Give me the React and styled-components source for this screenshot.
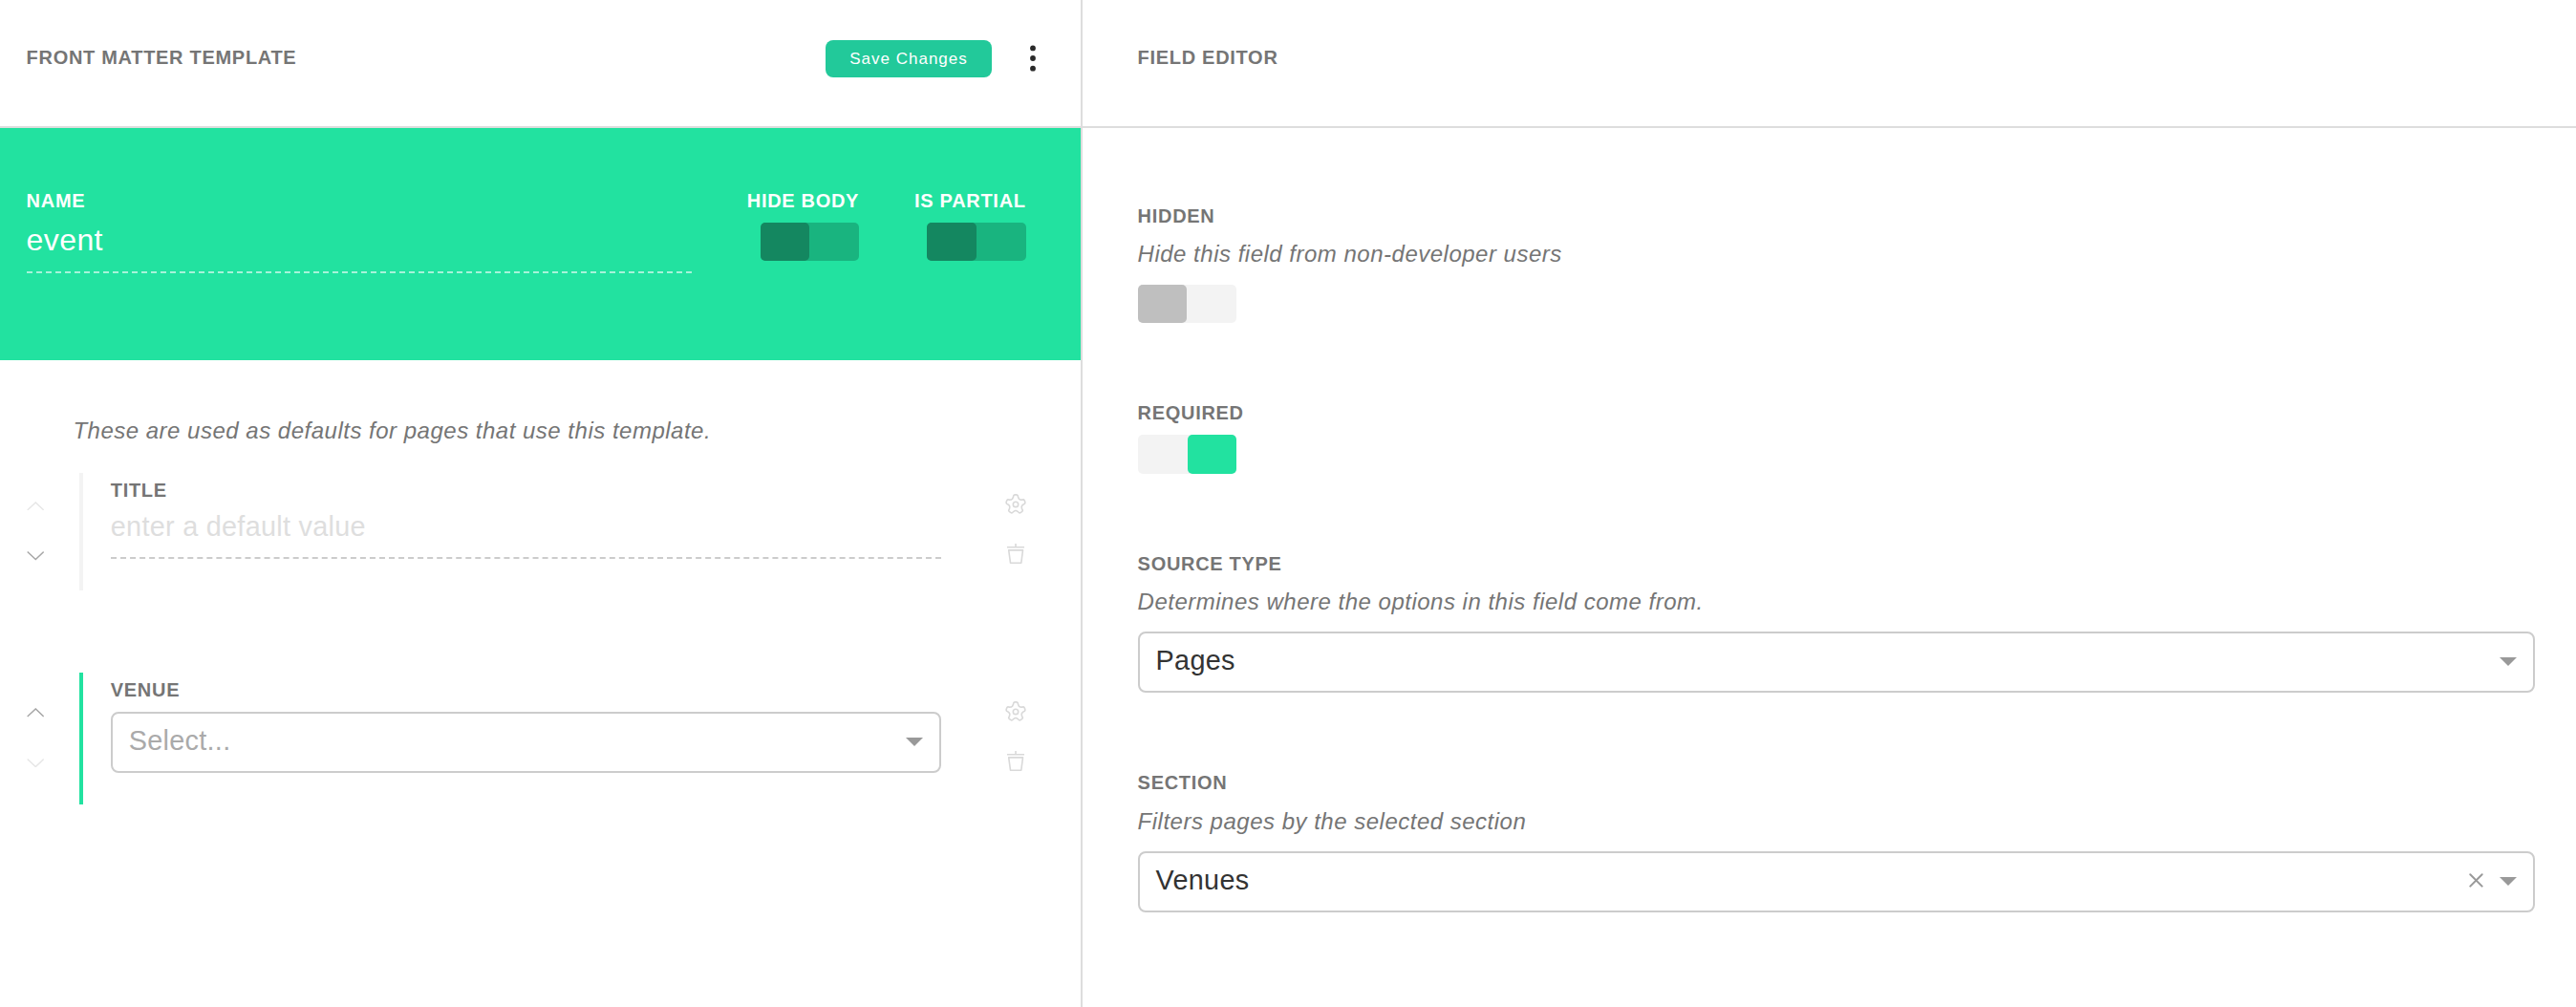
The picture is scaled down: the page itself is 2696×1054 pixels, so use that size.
import React from "react";
import styled, { createGlobalStyle } from "styled-components";

const GREEN = "#22e2a0";

const GlobalStyle = createGlobalStyle`
  * { box-sizing: border-box; }
  body {
    margin: 0;
    background: #fff;
    color: #2f2f2f;
    font-family: "Liberation Sans", Arial, sans-serif;
    letter-spacing: 0.5px;
  }
  svg { display: block; flex: none; }
`;

const Shell = styled.div`
  display: grid;
  grid-template-columns: 1133px 1fr;
  height: 1054px;
  overflow: hidden;
`;

const Panel = styled.section`
  display: flex;
  flex-direction: column;
  min-width: 0;
  border-right: ${(p) => (p.$divided ? "2px solid #ddd" : "none")};
`;

const Header = styled.header`
  display: flex;
  align-items: flex-start;
  height: 134px;
  padding: 42px 0 0 ${(p) => p.$inset}px;
  border-bottom: 2px solid #ddd;
`;

const Label = styled.div`
  font-size: 20px;
  letter-spacing: 0.7px;
  line-height: 24px;
  font-weight: 700;
  color: ${(p) => (p.$light ? "#fff" : "#757575")};
  text-transform: uppercase;
  white-space: nowrap;
`;

const Title = styled(Label)`
  flex: 1;
  margin-top: 6px;
`;

const SaveButton = styled.button`
  width: 174px;
  height: 39px;
  padding: 0;
  border: 0;
  border-radius: 8px;
  background: #22c99a;
  color: #fff;
  font: 17px/20px "Liberation Sans", Arial, sans-serif;
  letter-spacing: 1px;
`;

const MenuButton = styled.div`
  display: flex;
  margin: 0 44px 0 37px;
`;

const Banner = styled.div`
  display: flex;
  gap: 57.9px;
  height: 243px;
  padding: 64px 57.3px 0 27.6px;
  background: ${GREEN};
`;

const NameField = styled.div`
  flex: 1;
`;

const NameValue = styled.div`
  margin-top: 10px;
  padding-bottom: 14px;
  border-bottom: 2px dashed rgba(255, 255, 255, 0.6);
  color: #fff;
  font-size: 32px;
  letter-spacing: 0.4px;
  line-height: 38px;
`;

const SwitchField = styled.div`
  display: flex;
  flex-direction: column;
  align-items: flex-end;
  gap: 11px;
`;

const Track = styled.div`
  display: flex;
  justify-content: ${(p) => (p.$on ? "flex-end" : "flex-start")};
  width: 103.5px;
  height: 40.4px;
  border-radius: 5px;
  background: ${(p) => (p.$dark ? "#19b47f" : "#f3f3f3")};
`;

const Knob = styled.div`
  width: ${(p) => (p.$on ? "51px" : "50%")};
  border-radius: 5px;
  background: ${(p) => (p.$dark ? "#148760" : p.$on ? GREEN : "#bfbfbf")};
`;

const Hint = styled.p`
  margin: 0;
  color: #757575;
  font-size: 24px;
  line-height: 29px;
  font-style: italic;
`;

const Defaults = styled.div`
  padding: 59px 57px 0 27.6px;
`;

const DefaultsHint = styled(Hint)`
  margin: 0 0 30px 48.8px;
`;

const Rows = styled.div`
  display: flex;
  flex-direction: column;
  gap: 86px;
`;

const Row = styled.div`
  display: flex;
`;

const Movers = styled.div`
  display: flex;
  flex-direction: column;
  justify-content: center;
  gap: 43px;
  width: 55.4px;
  padding-bottom: 2px;
`;

const RowBody = styled.div`
  width: 902px;
  padding: 6px 0 33px 28.8px;
  border-left: 4px solid ${(p) => (p.$active ? GREEN : "#f3f3f3")};
`;

const TextInput = styled.div`
  margin-top: 9px;
  padding-bottom: 15px;
  border-bottom: 2px dashed #ccc;
  color: #dedede;
  font-size: 28.8px;
  letter-spacing: 0.29px;
  line-height: 34px;
`;

const Actions = styled.div`
  display: flex;
  flex-direction: column;
  justify-content: center;
  gap: 31px;
  margin-left: auto;
  padding-bottom: 5.5px;
`;

const SelectBox = styled.div`
  display: flex;
  align-items: center;
  gap: 17.5px;
  height: 64px;
  margin-top: ${(p) => p.$gap}px;
  padding: 0 17px 1px;
  border: 2px solid #ccc;
  border-radius: 8px;
`;

const SelectText = styled.div`
  flex: 1;
  padding-bottom: 3px;
  color: ${(p) => (p.$placeholder ? "#aaa" : "#333")};
  font-size: 28.8px;
  letter-spacing: 0.29px;
  line-height: 34px;
`;

const Caret = styled.span`
  border: 9px solid transparent;
  border-top-color: #999;
  border-bottom: 0;
`;

const Editor = styled.div`
  display: flex;
  flex-direction: column;
  gap: 82px;
  padding: 80px 43px 0 57.6px;
`;

const EditorHint = styled(Hint)`
  margin: 13.4px 0 17.2px;
`;

const ToggleSpace = styled.div`
  height: 11.2px;
`;

const Dots = () => (
  <svg width="12" height="39" viewBox="0 0 12 39" fill="#2a2a2a">
    <circle cx="6" cy="8.4" r="2.9" />
    <circle cx="6" cy="19" r="2.9" />
    <circle cx="6" cy="29.7" r="2.9" />
  </svg>
);

const Chevron = ({ down, dim }) => (
  <svg width="18" height="9.5" viewBox="0 0 18 9.5" fill="none" stroke={dim ? "#e6e6e6" : "#a6a6a6"} strokeWidth="1.4">
    <path d={down ? "M0.7 0.6 9.3 8.6 17.7 0.6" : "M0.7 8.9 9.3 0.9 17.7 8.9"} />
  </svg>
);

const polar = (r, deg) => {
  const a = (deg * Math.PI) / 180;
  return `${(11 + r * Math.cos(a)).toFixed(2)} ${(10.9 + r * Math.sin(a)).toFixed(2)}`;
};

const flower =
  [-90, -18, 54, 126, 198]
    .map(
      (t, i) =>
        `${i ? "L" : "M"}${polar(6.7, t - 31)}L${polar(8.1, t - 18)}Q${polar(10.1, t - 15)} ${polar(10.1, t - 6)}` +
        `L${polar(10.1, t + 6)}Q${polar(10.1, t + 15)} ${polar(8.1, t + 18)}L${polar(6.7, t + 31)}`
    )
    .join("") + "Z";

const Flower = () => (
  <svg width="22" height="21" viewBox="0 0 22 21" fill="none" stroke="#d9d9d9" strokeWidth="1.6" strokeLinejoin="round">
    <path d={flower} />
    <circle cx="11" cy="10.9" r="2.7" />
  </svg>
);

const Trash = () => (
  <svg width="22" height="21" viewBox="0 0 22 21" fill="none" stroke="#d9d9d9" strokeWidth="1.6">
    <path d="M11 0V3.2M2 3.8H20M3.7 6.9H18.5L16.8 20.2H5.5Z" strokeLinejoin="round" />
  </svg>
);

const ClearIcon = styled.svg`
  margin-bottom: 2px;
`;

const Clear = () => (
  <ClearIcon width="15" height="15" viewBox="0 0 15 15" stroke="#999" strokeWidth="2" strokeLinecap="round">
    <path d="M1.3 1.2 13.7 13.6M13.7 1.2 1.3 13.6" />
  </ClearIcon>
);

const Toggle = ({ on, dark }) => (
  <Track $on={on} $dark={dark}>
    <Knob $on={on} $dark={dark} />
  </Track>
);

const Select = ({ text, placeholder, clearable, gap = 0 }) => (
  <SelectBox $gap={gap}>
    <SelectText $placeholder={placeholder}>{text}</SelectText>
    {clearable && <Clear />}
    <Caret />
  </SelectBox>
);

const DefaultRow = ({ label, first, active, children }) => (
  <Row>
    <Movers>
      <Chevron dim={first} />
      <Chevron down dim={!first} />
    </Movers>
    <RowBody $active={active}>
      <Label>{label}</Label>
      {children}
    </RowBody>
    <Actions>
      <Flower />
      <Trash />
    </Actions>
  </Row>
);

export default function App() {
  return (
    <>
      <GlobalStyle />
      <Shell>
        <Panel $divided>
          <Header $inset={27.6}>
            <Title>Front Matter Template</Title>
            <SaveButton>Save Changes</SaveButton>
            <MenuButton>
              <Dots />
            </MenuButton>
          </Header>
          <Banner>
            <NameField>
              <Label $light>Name</Label>
              <NameValue>event</NameValue>
            </NameField>
            <SwitchField>
              <Label $light>Hide Body</Label>
              <Toggle dark />
            </SwitchField>
            <SwitchField>
              <Label $light>Is Partial</Label>
              <Toggle dark />
            </SwitchField>
          </Banner>
          <Defaults>
            <DefaultsHint>These are used as defaults for pages that use this template.</DefaultsHint>
            <Rows>
              <DefaultRow label="Title" first>
                <TextInput>enter a default value</TextInput>
              </DefaultRow>
              <DefaultRow label="Venue" active>
                <Select text="Select..." placeholder gap={11} />
              </DefaultRow>
            </Rows>
          </Defaults>
        </Panel>
        <Panel>
          <Header $inset={57.6}>
            <Title>Field Editor</Title>
          </Header>
          <Editor>
            <div>
              <Label>Hidden</Label>
              <EditorHint>Hide this field from non-developer users</EditorHint>
              <Toggle />
            </div>
            <div>
              <Label>Required</Label>
              <ToggleSpace />
              <Toggle on />
            </div>
            <div>
              <Label>Source Type</Label>
              <EditorHint>Determines where the options in this field come from.</EditorHint>
              <Select text="Pages" />
            </div>
            <div>
              <Label>Section</Label>
              <EditorHint>Filters pages by the selected section</EditorHint>
              <Select text="Venues" clearable />
            </div>
          </Editor>
        </Panel>
      </Shell>
    </>
  );
}
